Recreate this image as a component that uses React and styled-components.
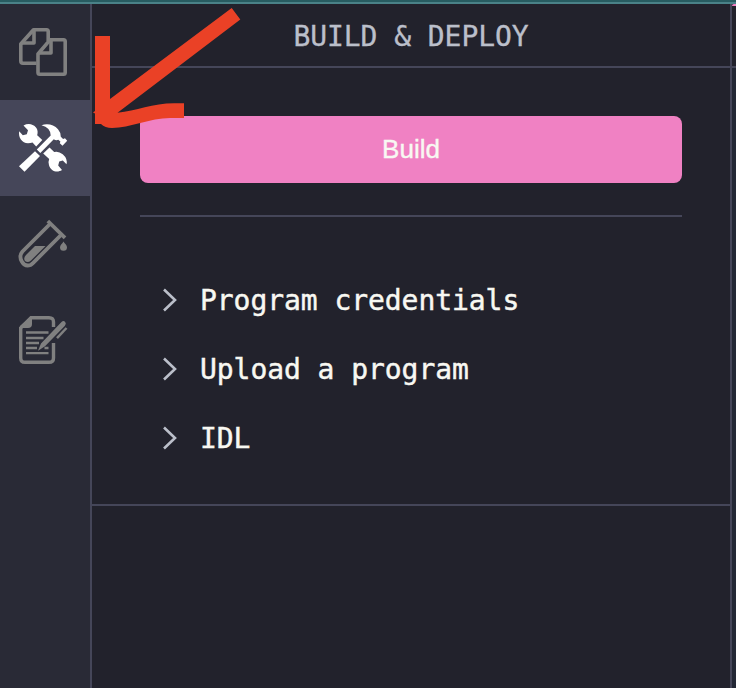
import React from "react";
import styled, { createGlobalStyle } from "styled-components";

const GlobalStyle = createGlobalStyle`
  * { box-sizing: border-box; }
  html, body { margin: 0; background: #22222c; overflow: hidden; }
`;

const Window = styled.div`
  position: relative;
  width: 736px;
  height: 688px;
  display: flex;
  flex-direction: column;
  overflow: hidden;
  background: #22222c;
  font-family: "DejaVu Sans Mono", monospace;
`;

const TopStrip = styled.div`
  flex: none;
  height: 4px;
  background: #285c61;
  border-bottom: 2px solid #4a8288;
`;

const Workspace = styled.div`
  flex: 1;
  display: flex;
`;

const IconBar = styled.nav`
  width: 92px;
  flex: none;
  display: flex;
  flex-direction: column;
  background: #292a36;
  border-right: 2px solid #454659;
`;

const IconButton = styled.button`
  height: 96px;
  padding: 0 0 0 19px;
  border: 0;
  display: flex;
  align-items: center;
  background: ${(p) => (p.$active ? "#454659" : "transparent")};
  color: ${(p) => (p.$active ? "#ffffff" : "#808080")};
`;

const Icon = styled.svg`
  display: block;
  width: 48px;
  height: 48px;
  overflow: visible;
`;

const Panel = styled.main`
  width: 640px;
  flex: none;
  border-right: 2px solid #454659;
`;

const PanelHeader = styled.header`
  height: 64px;
  padding-top: 4px;
  display: flex;
  align-items: center;
  justify-content: center;
  border-bottom: 2px solid #454659;
  color: #bbbfca;
  font-size: 28px;
  letter-spacing: -0.056px;
  line-height: 58px;
  -webkit-text-stroke: 0.35px currentColor;
`;

const PanelBody = styled.section`
  height: 438px;
  padding: 48px 48px 0;
  border-bottom: 2px solid #454659;
`;

const BuildButton = styled.button`
  display: block;
  width: 542px;
  height: 67px;
  padding: 0 0 2px;
  border: 0;
  border-radius: 8px;
  background: #f081c3;
  color: #f8f8f2;
  font: 26px/64px "Liberation Sans", Arial, sans-serif;
  -webkit-text-stroke: 0.4px currentColor;
`;

const Divider = styled.hr`
  height: 2px;
  margin: 32px 0 48px;
  border: 0;
  background: #454659;
`;

const Row = styled.div`
  height: 69px;
  padding-left: 23px;
  display: flex;
  align-items: center;
  gap: 23px;
  color: #f8f8f2;
  font-size: 28px;
  letter-spacing: -0.056px;
  -webkit-text-stroke: 0.45px currentColor;
`;

const RowLabel = styled.span`
  padding-top: 2px;
`;

const Chevron = styled.svg`
  width: 14px;
  height: 24px;
`;

const EditorEdge = styled.aside`
  flex: 1;
  background: #232735;
`;

const EditorTab = styled.div`
  height: 64px;
  background: #22222c;
  border-top: 2px solid #f081c3;
  border-top-left-radius: 2px;
  border-bottom: 2px solid #454659;
`;

const Annotation = styled.svg`
  position: absolute;
  left: 0;
  top: 0;
  width: 260px;
  height: 140px;
  pointer-events: none;
`;

const FilesIcon = () => (
  <Icon viewBox="0 0 48 48" fill="none" stroke="currentColor" strokeWidth="3.6" strokeLinejoin="round">
    <path d="M17.5 35.2H4Q1.8 35.2 1.8 33V16L14.5 1.8H27.5Q29.2 1.8 29.2 3.5V13" />
    <path d="M15 2V15H2.5" />
    <path d="M33 11.8H44.5Q46.2 11.8 46.2 13.5V44.5Q46.2 46.2 44.5 46.2H20.7Q19 46.2 19 44.5V26L31 11.8Z" />
    <path d="M32 12.5V25H19.5" />
  </Icon>
);

const ToolsIcon = () => (
  <Icon viewBox="0 0 48 48" fill="currentColor">
    <path d="M4.5 1.5 9 6.3 7.8 10.3 3.8 11.2.2 7.3C-1 13.3 3 19.2 9 19.2Q11.5 19.2 13.5 18.5L17.2 22.5 23.3 16 18.2 11.2C19.8 6 17.1 1.6 11.8.3Q8.3-.5 4.5 1.5Z" />
    <path d="M24.2 29.4 30.5 23.6 35.2 28Q39.5 26.8 43.7 30.2 48.8 34.6 47.5 40.2L43.8 36.6 40.2 37.6 39.2 41.6 43 46.1C37.8 49.4 31.8 46.9 30 41.2Q28.9 38 30.2 35.1Z" />
    <path d="M0 42.2 16 27.3 21 32 5.5 47.7Z" />
    <path d="M17.8 25.5 31.7 11.5Q31.5 3.6 22.5 1.3C28-.8 35 .5 39 5.2Q42.2 9 41.8 12.8L44.1 15 46 14.3 48.2 16.8 43.5 21.7 40.8 19.2 41.4 17.5 39.3 15.8Q37 17 34.8 15.2L21.3 28.9Z" />
  </Icon>
);

const TubeIcon = () => (
  <Icon viewBox="0 0 48 48">
    <g fill="none" stroke="currentColor" strokeWidth="3.8">
      <path d="M31.5 3.5 3.5 31.5Q-.3 36 2.8 41.5T11.5 45L13.5 43.5 41.5 15.5" />
      <path d="M28.8 1 46 17.8" />
    </g>
    <path d="M16 26H26.5L12 40.5Q8.6 43.4 6 41 4.1 38 7 35Z" fill="currentColor" />
    <path d="M44.5 21.5C43.5 23.5 41 25 41 27.3A3.5 3.5 0 0 0 48 27.3C48 25 45.5 23.5 44.5 21.5Z" fill="currentColor" />
  </Icon>
);

const NoteIcon = () => (
  <Icon viewBox="0 0 48 48" fill="none" stroke="currentColor">
    <path d="M34.5 11V6Q34.5 1.7 30 1.7H12L1.7 12V42Q1.7 46.3 6 46.3H30Q34.5 46.3 34.5 42V27" strokeWidth="3.4" />
    <path d="M11.5 1H13V8Q13 12 9 12H1V10Z" fill="currentColor" stroke="none" />
    <path d="M7 16.5H29.5M7 22H24.5M7 27H20M7 32H18M25.5 32H29.5M7 37.2H29.5" strokeWidth="2.3" />
    <path d="M19 34.8 22 27.5 42.5 6.1Q44.5 4.1 46.2 6.1 47.7 7.8 45.7 9.9L26 30.2Z" fill="currentColor" stroke="none" />
    <path d="M47.5 12 38 22.2" strokeWidth="2.5" />
  </Icon>
);

const tools = [
  { name: "Explorer", Glyph: FilesIcon },
  { name: "Build and deploy", Glyph: ToolsIcon, active: true },
  { name: "Test", Glyph: TubeIcon },
  { name: "Tutorials", Glyph: NoteIcon },
];

const sections = ["Program credentials", "Upload a program", "IDL"];

export default function App() {
  return (
    <Window>
      <GlobalStyle />
      <TopStrip />
      <Workspace>
        <IconBar>
          {tools.map(({ name, Glyph, active }) => (
            <IconButton key={name} aria-label={name} $active={active}>
              <Glyph />
            </IconButton>
          ))}
        </IconBar>
        <Panel>
          <PanelHeader>BUILD &amp; DEPLOY</PanelHeader>
          <PanelBody>
            <BuildButton>Build</BuildButton>
            <Divider />
            {sections.map((label) => (
              <Row key={label}>
                <Chevron viewBox="0 0 14 24" fill="none" stroke="#bbbfca" strokeWidth="2.6">
                  <path d="M1 1.5 12 12 1 22.5" />
                </Chevron>
                <RowLabel>{label}</RowLabel>
              </Row>
            ))}
          </PanelBody>
        </Panel>
        <EditorEdge>
          <EditorTab />
        </EditorEdge>
      </Workspace>
      <Annotation viewBox="0 0 260 140" fill="#ea4126">
        <path d="M95 36H110V99L231.7 8 240.3 19.5 117.5 112.8C136 111 153 103.3 174 103.3H184V118H170C150 118 130 128 112 128Q105 128 101 124H95V113.5L93 112.5 95 111Z" />
      </Annotation>
    </Window>
  );
}
